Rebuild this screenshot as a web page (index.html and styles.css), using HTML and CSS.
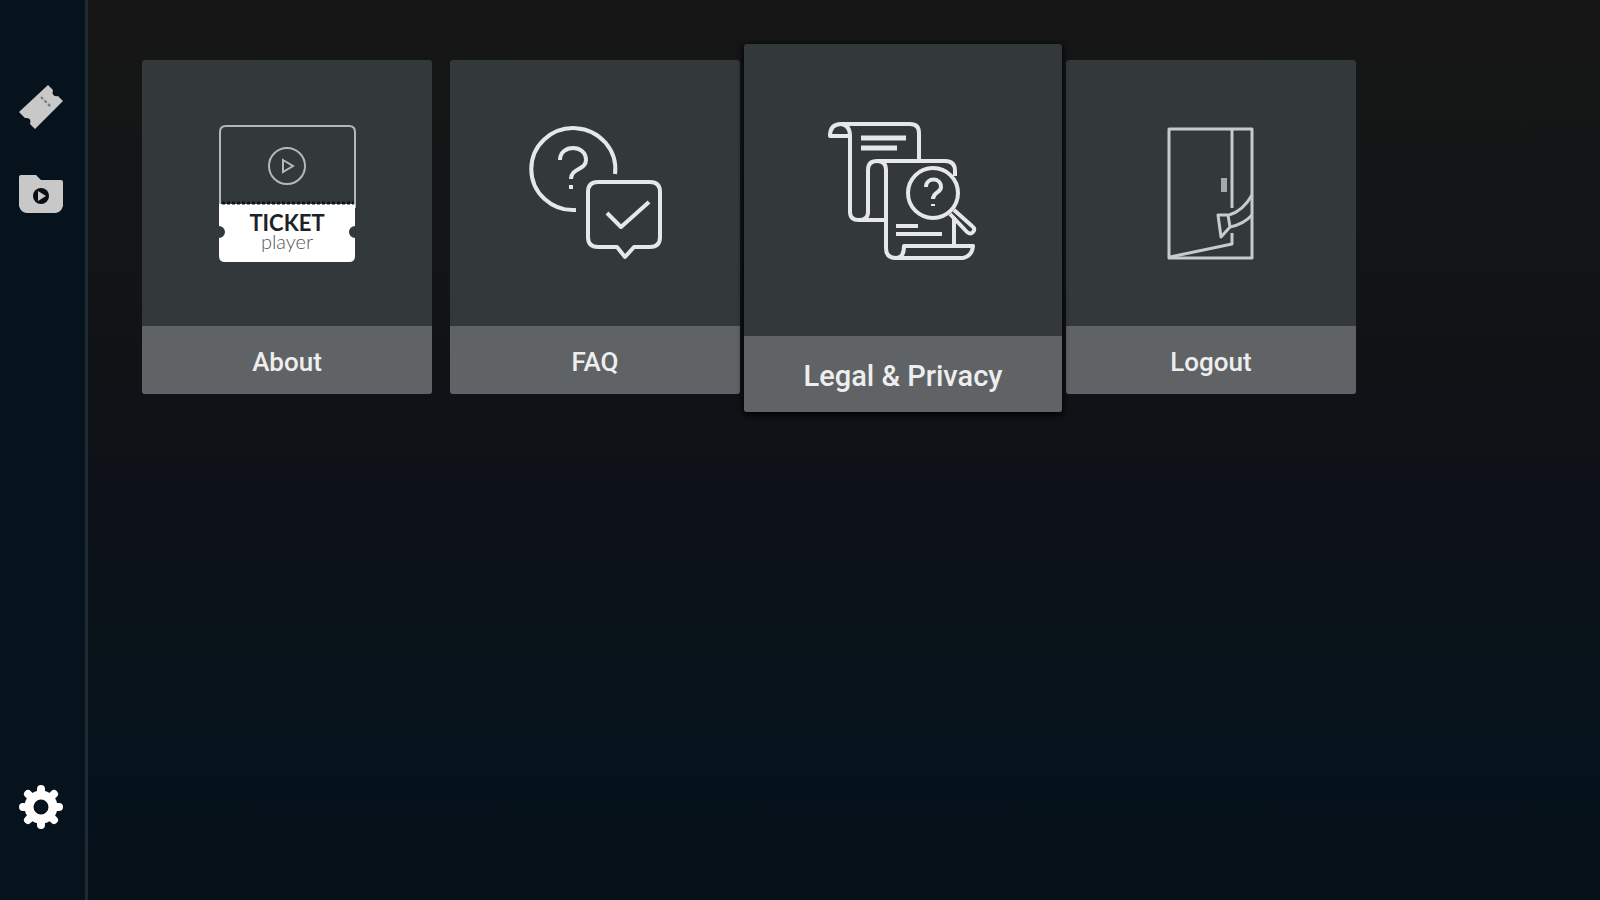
FILE: index.html
```
<!DOCTYPE html>
<html lang="en">
<head>
    <meta charset="UTF-8">
    <meta name="viewport" content="width=device-width, initial-scale=1">
    <title>Ticket Player - Settings</title>
    <link rel="stylesheet" href="styles.css">
</head>
<body>
<nav class="sidebar" aria-label="Main">
    <a class="nav-item" href="#tickets" aria-label="Tickets">
        <svg viewBox="0 0 44 44" width="44" height="44">
            <path fill="currentColor" d="M29 0 L34 5 Q32 12 39 11 L44 16 L16 44 L11 39 Q13 32 6 33 L0 27 Z"/>
            <path d="M22 12 L32 22" stroke="#777" stroke-width="2" stroke-dasharray="3 2"/>
        </svg>
    </a>
    <a class="nav-item" href="#library" aria-label="Library">
        <svg viewBox="0 0 44 44" width="44" height="44">
            <path fill="currentColor" d="M2 3 H17 L22 8 H42 Q44 8 44 10 V34 Q42 41 36 41 H8 Q2 41 0 34 V5 Q0 3 2 3 Z"/>
            <circle cx="22" cy="24" r="8" fill="#0a0d10"/>
            <path fill="currentColor" d="M19 19 L27 24 L19 29 Z"/>
        </svg>
    </a>
    <a class="nav-item nav-settings active" href="#settings" aria-label="Settings" aria-current="page">
        <svg viewBox="0 0 44 44" width="44" height="44">
            <g fill="none" stroke="currentColor">
                <circle cx="22" cy="22" r="12" stroke-width="9"/>
                <path d="M22 4 V9 M22 35 V40 M4 22 H9 M35 22 H40 M9 9 L13 13 M31 31 L35 35 M9 35 L13 31 M31 13 L35 9" stroke-width="8" stroke-linecap="round"/>
            </g>
        </svg>
    </a>
</nav>

<main class="content">
    <button class="card" type="button">
        <span class="card-art">
            <svg viewBox="0 0 150 150" width="150" height="150" aria-hidden="true">
                <path d="M8 90 V14 Q8 8 14 8 H137 Q143 8 143 14 V90" fill="none" stroke="#b4b8b9" stroke-width="2"/>
                <circle cx="75" cy="48" r="18" fill="none" stroke="#b4b8b9" stroke-width="2"/>
                <path d="M71 42 L81 48 L71 54 Z" fill="none" stroke="#b4b8b9" stroke-width="2"/>
                <path d="M7 86 H143 V108 A6 6 0 0 0 143 120 V138 Q143 144 137 144 H13 Q7 144 7 138 V120 A6 6 0 0 0 7 108 Z" fill="#fff"/>
                <path d="M10 85 H142" stroke="#10171a" stroke-width="3" stroke-dasharray="3 2"/>
                <text class="logo-top" x="75" y="113" text-anchor="middle">TICKET</text>
                <text class="logo-bottom" x="75" y="131" text-anchor="middle">player</text>
            </svg>
        </span>
        <span class="card-label">About</span>
    </button>

    <button class="card" type="button">
        <span class="card-art">
            <svg class="line-icon" viewBox="0 0 150 150" width="150" height="150" aria-hidden="true">
                <path d="M95 56 A42 41 0 1 0 56 92"/>
                <path d="M40 42 C40 26 66 26 66 42 C66 52 51 50 51 61 M51 67 V71"/>
                <path d="M97 129 H78 Q68 129 68 119 V74 Q68 64 78 64 H130 Q140 64 140 74 V119 Q140 129 130 129 H114 L105 139 Z"/>
                <path d="M87 95 L101 109 L129 84"/>
            </svg>
        </span>
        <span class="card-label">FAQ</span>
    </button>

    <button class="card focused" type="button">
        <span class="card-art">
            <svg class="line-icon" viewBox="0 0 160 160" width="160" height="160" aria-hidden="true">
                <path d="M27 26 H7 Q7 14 18 14 H87 Q96 14 96 23 V50"/>
                <path d="M18 14 Q27 15 27 26 V102 Q27 110 36 110 H63"/>
                <path d="M36 110 Q45 110 45 102 V60 Q45 51 54 51 H122 Q132 51 132 61 V66"/>
                <path d="M54 51 Q63 51 63 60 V138 Q63 148 73 148 H140 Q149 146 150 136 H81 Q81 148 73 148"/>
                <path d="M131 107 V136"/>
                <path d="M38 28 H83 M38 38 H74" stroke-width="5"/>
                <path d="M73 116 H95 M73 124 H119"/>
                <circle cx="110" cy="83" r="25"/>
                <path d="M103 77 C103 67 118 67 118 77 C118 83 110 82 110 89 M110 94 V96"/>
                <path d="M127 104 L144 122 Q148 125 150 122 Q153 119 149 116 L131 100"/>
            </svg>
        </span>
        <span class="card-label">Legal &amp; Privacy</span>
    </button>

    <button class="card" type="button">
        <span class="card-art">
            <svg class="line-icon door" viewBox="0 0 150 150" width="150" height="150" aria-hidden="true">
                <rect x="33" y="11" width="83" height="129"/>
                <path d="M96 12 V90 M96 115 V126 L34 139"/>
                <rect class="handle" x="85" y="60" width="6" height="14"/>
                <path d="M116 77 Q107 93 93 97 M116 97 Q108 106 94 109"/>
                <path d="M82 97 H92 L94 109 L85 119 Z"/>
            </svg>
        </span>
        <span class="card-label">Logout</span>
    </button>
</main>
</body>
</html>
```
FILE: styles.css
```
* {
    box-sizing: border-box;
}
body {
    margin: 0;
    min-height: 100vh;
    display: flex;
    background: #07121b;
    color: #eee;
    font-family: Roboto, "Liberation Sans", sans-serif;
}

/* sidebar */
.sidebar {
    flex: none;
    width: 88px;
    padding: 85px 0 71px 19px;
    display: flex;
    flex-direction: column;
    gap: 43px;
    background: #06121c;
    border-right: 3px solid #1d2935;
}
.nav-item {
    width: 44px;
    height: 44px;
    color: #c8c8c8;
}
.nav-item svg {
    display: block;
}
.nav-item.active {
    color: #fff;
}
.nav-settings {
    margin-top: auto;
}

/* cards */
.content {
    flex: 1;
    display: flex;
    flex-wrap: wrap;
    align-items: flex-start;
    align-content: flex-start;
    gap: 18px;
    padding: 60px 54px;
    background: linear-gradient(#161616 0%, #131516 25%, #0f1216 46%, #0d1119 58%, #09131a 70%, #07131c 83%, #06111a 100%);
}
.card {
    width: 290px;
    padding: 0;
    border: 0;
    border-radius: 3px;
    overflow: hidden;
    background: #33393b;
    color: inherit;
    font: inherit;
    font-size: 26px;
    font-weight: 500;
    cursor: pointer;
}
.card-art {
    height: 266px;
    display: flex;
    align-items: center;
    justify-content: center;
}
.card-label {
    display: block;
    padding: 20px 0 16px;
    line-height: 32px;
    background: #606365;
}

/* the focused card is bigger and sits over its neighbours */
.card.focused {
    width: 318px;
    margin: -16px -14px;
    font-size: 29px;
    box-shadow: 0 2px 5px 2px rgba(0, 0, 0, 0.7);
    z-index: 1;
}
.focused .card-art {
    height: 292px;
}
.focused .card-label {
    padding: 24px 0 20px;
}

/* icons */
.line-icon {
    fill: none;
    stroke: #e6e8e8;
    stroke-width: 4px;
    stroke-linejoin: round;
}
.line-icon.door {
    stroke: #c8cbcc;
    stroke-width: 3px;
}
.handle {
    fill: #a5a9aa;
    stroke: none;
}
.logo-top {
    font: bold 22px Lato, sans-serif;
    fill: #1c2226;
}
.logo-bottom {
    font: 300 20px Lato, sans-serif;
    fill: #555;
}
```
